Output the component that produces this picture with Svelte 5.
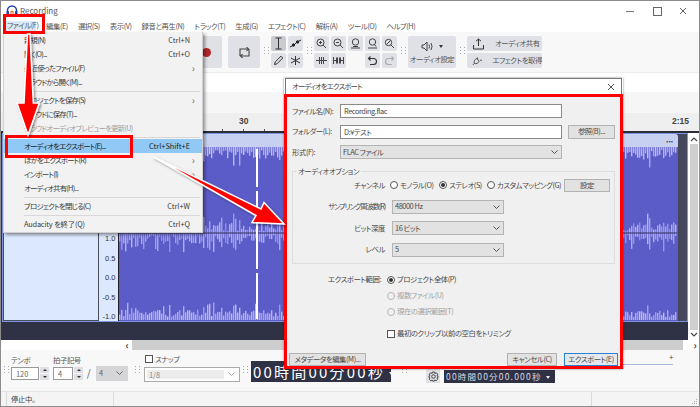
<script lang="ts">
	const menus = ['編集(E)', '選択(S)', '表示(V)', '録音と再生(N)', 'トラック(T)', '生成(G)', 'エフェクト(C)', '解析(A)', 'ツール(O)', 'ヘルプ(H)'];

	const fileMenu = [
		{ label: '新規(N)', key: 'Ctrl+N' },
		{ label: '開く(O)...', key: 'Ctrl+O' },
		{ label: '最近使ったファイル(F)', more: true },
		{ label: 'クラウドから開く(M)...' },
		{ sep: true },
		{ label: 'プロジェクトを保存(S)', more: true },
		{ label: 'クラウドに保存(T)...' },
		{ label: 'クラウドオーディオプレビューを更新(U)', off: true },
		{ sep: true },
		{ label: 'オーディオをエクスポート(E)...', key: 'Ctrl+Shift+E', on: true },
		{ label: 'ほかをエクスポート(R)', more: true },
		{ label: 'インポート(I)', more: true },
		{ label: 'オーディオ共有(H)...' },
		{ sep: true },
		{ label: 'プロジェクトを閉じる(C)', key: 'Ctrl+W' },
		{ sep: true },
		{ label: 'Audacity を終了(Q)', key: 'Ctrl+Q', latin: true },
	];

	// same bars on every load
	let seed = 7;
	function rnd() {
		seed = (seed * 16807) % 2147483647;
		return seed / 2147483647;
	}

	const bars: { x: number; y: number; h: number; o: number }[] = [];
	for (let x = 0; x < 558; x += 2) {
		const big = rnd() > 0.75 ? 1.8 : 1;
		bars.push({ x, y: 0, h: (3 + rnd() * 9) * big, o: 0.7 + rnd() * 0.3 });
		const up = (2 + rnd() * 9) * big;
		const down = (2 + rnd() * 9) * big;
		bars.push({ x, y: 86 - up, h: up + down, o: 0.5 + rnd() * 0.4 });
		const h = (3 + rnd() * 7) * big;
		bars.push({ x, y: 173 - h, h, o: 0.6 + rnd() * 0.4 });
	}

	const ticks = [12, 33, 54, 75, 96, 117, 138, 159, 180, 201, 222, 243, 264, 285, 510, 530, 550, 570, 590, 610, 630, 650, 670];
	const grip = [0, 1, 2];
</script>

<div class="window">
	<header class="titlebar">
		<svg width="12" height="12" viewBox="0 0 12 12">
			<path d="M1.5 7V5.5a4.5 4.5 0 0 1 9 0V7" fill="none" stroke="#1f3fa8" stroke-width="1.5" />
			<rect x="0.5" y="6" width="2.5" height="5" rx="1" fill="#1f3fa8" />
			<rect x="9" y="6" width="2.5" height="5" rx="1" fill="#1f3fa8" />
			<path d="M4 8h4M4.5 6.5h3M5 9.5h2" stroke="#e8601c" stroke-width="1.2" />
			<path d="M5.5 4.5h1v1h-1z" fill="#f2b01e" />
		</svg>
		<span class="title">Recording</span>
		<div class="winbtns">
			<span class="min"></span>
			<span class="max"></span>
			<svg width="8" height="8" viewBox="0 0 8 8"><path d="M1 1l6 6M7 1l-6 6" stroke="#555" stroke-width="0.9" /></svg>
		</div>
	</header>

	<nav class="menubar">
		<span class="menu-file">ファイル(F)</span>
		{#each menus as m}
			<span class="menu-item">{m}</span>
		{/each}
	</nav>

	<div class="toolbar">
		<div class="tbtn big"><span class="rec"></span></div>
		<div class="tbtn big loop">
			<svg width="13" height="13" viewBox="0 0 13 13" fill="none" stroke="#444" stroke-width="1.1">
				<path d="M3 9.5H2V3h8" /><path d="M8.5 1.2L10.5 3 8.5 4.8" /><path d="M10 3.5h1V10H3" /><path d="M4.5 8.2L2.5 10l2 1.8" />
			</svg>
		</div>
		<div class="grip">{#each grip as _}<i></i><i></i>{/each}</div>
		<div class="tools">
			<div class="sbtn active">
				<svg width="11" height="13" viewBox="0 0 11 13" fill="none" stroke="#333" stroke-width="1"><path d="M2.5 1h6M5.5 1v11M2.5 12h6" /></svg>
			</div>
			<div class="sbtn">
				<svg width="13" height="11" viewBox="0 0 13 11" fill="none" stroke="#222" stroke-width="1"><path d="M1 9l4-2 3-3 4-2" /><circle cx="4.5" cy="7" r="1.2" fill="#222" /><circle cx="8.5" cy="4" r="1.2" fill="#222" /></svg>
			</div>
			<div class="sbtn">
				<svg width="11" height="11" viewBox="0 0 11 11" fill="none" stroke="#333" stroke-width="1"><path d="M1.5 9.5l.7-2.6L8 1.2l1.800 1.800L4 8.800z" /></svg>
			</div>
			<div class="sbtn">
				<svg width="11" height="11" viewBox="0 0 11 11" fill="none" stroke="#333" stroke-width="1"><path d="M5.5 1v9M1 3l9 5M10 3L1 8" /></svg>
			</div>
		</div>
		<div class="grip">{#each grip as _}<i></i><i></i>{/each}</div>
		<div class="zooms">
			<div class="sbtn">
				<svg width="11" height="11" viewBox="0 0 11 11" fill="none" stroke="#444"><circle cx="4.5" cy="4.5" r="3.5" /><path d="M7 7l3 3M3 4.5h3M4.5 3v3" /></svg>
			</div>
			<div class="sbtn">
				<svg width="11" height="11" viewBox="0 0 11 11" fill="none" stroke="#444"><circle cx="4.5" cy="4.5" r="3.5" /><path d="M7 7l3 3M3 4.5h3" /></svg>
			</div>
			<div class="sbtn">
				<svg width="11" height="11" viewBox="0 0 11 11" fill="none" stroke="#444"><circle cx="5.5" cy="4" r="3.2" /><path d="M1 10h9M3 8.5h5" /></svg>
			</div>
			<div class="sbtn">
				<svg width="11" height="11" viewBox="0 0 11 11" fill="none" stroke="#444"><circle cx="5.5" cy="4" r="3.2" /><path d="M1 10h9M7.5 6.5l1.5 2" /></svg>
			</div>
			<div class="sbtn">
				<svg width="11" height="11" viewBox="0 0 11 11" fill="none" stroke="#444"><circle cx="4.5" cy="4.5" r="3.2" /><path d="M7 7l3 3M2.5 6.5l4-4" /></svg>
			</div>
			<div class="sbtn">
				<svg width="11" height="7" viewBox="0 0 11 7" fill="#444"><path d="M0 3h11v1H0zM3 0h1v7H3zM5 0h1v7H5zM7 0h1v7H7z" /></svg>
			</div>
			<div class="sbtn">
				<svg width="11" height="7" viewBox="0 0 11 7" fill="#444"><path d="M0 0h1v7H0zM10 0h1v7h-1zM3 .5h2v6H3zM6 .5h2v6H6zM1 3h2v1H1zM8 3h2v1H8z" /></svg>
			</div>
			<div class="sempty"></div>
			<div class="sbtn">
				<svg width="11" height="10" viewBox="0 0 11 10" fill="none" stroke="#333" stroke-width="1.1"><path d="M3 8.5h3.5a3 3 0 0 0 0-6H1.5" /><path d="M3.5 .5l-2 2 2 2" /></svg>
			</div>
			<div class="sbtn">
				<svg width="11" height="10" viewBox="0 0 11 10" fill="none" stroke="#aaa" stroke-width="1.1"><path d="M8 8.5H4.5a3 3 0 0 1 0-6h5" /><path d="M7.5 .5l2 2-2 2" /></svg>
			</div>
		</div>
		<div class="grip">{#each grip as _}<i></i><i></i>{/each}</div>
		<div class="tbtn audio">
			<div class="audio-ico">
				<svg width="15" height="11" viewBox="0 0 15 11" fill="none" stroke="#333" stroke-width="0.9"><path d="M1 4v3h2l3 3V1L3 4zM8 3.5q1 2 0 4M10 2q2 3.5 0 7" /></svg>
				<span class="tri"></span>
			</div>
			<span class="tlabel">オーディオ設定</span>
		</div>
		<div class="grip">{#each grip as _}<i></i><i></i>{/each}</div>
		<div class="share">
			<div class="sharebtn">
				<svg width="13" height="12" viewBox="0 0 13 12" fill="none" stroke="#333"><path d="M1.5 7v4h10V7M6.5 8V1M4 3.2L6.5 1 9 3.2" /></svg>
				<span>オーディオ共有</span>
			</div>
			<div class="sharebtn">
				<svg width="13" height="12" viewBox="0 0 13 12" fill="none" stroke="#333"><path d="M1 11l2-2c-1-2 0-5 3-6l3 3c-1 3-4 4-6 3M7 1.5v2.5M10 5h2.5" /></svg>
				<span>エフェクトを取得</span>
			</div>
		</div>
	</div>

	<div class="gapband"></div>

	<div class="ruler">
		{#each ticks as t}
			<i class="tick" style="left:{t + 209}px"></i>
		{/each}
		<span class="rlabel r30">30</span>
		<span class="rlabel r215">2:15</span>
	</div>

	<div class="tracks">
		<div class="trackarea">
			<div class="track">
				<div class="trackhead"></div>
				<div class="vruler">
					{#each [0, 1] as _}
						<div class="vchan">
							<span>1.0</span><span>0.5</span><span>0.0</span><span>-0.5</span><span>-1.0</span>
						</div>
					{/each}
				</div>
				<div class="clip">
					<div class="cliphead"><b>•••</b></div>
					<svg class="wave" width="558" height="174" viewBox="0 0 558 174">
						{#each bars as b}
							<rect x={b.x} y={b.y} width="1.4" height={b.h} fill="#c3c1f0" opacity={b.o} />
						{/each}
						<rect x="0" y="85.5" width="558" height="1" fill="#2e2e58" />
						<path d="M138 2v38M138 44v78M138 126v46" stroke="#fff" stroke-width="2" />
					</svg>
				</div>
				<div class="trackrest"></div>
			</div>
			<div class="trackfoot"></div>
		</div>
		<div class="vscroll">
			<svg class="up" width="8" height="6" viewBox="0 0 8 6"><path d="M1 5l3-3 3 3" fill="none" stroke="#444" stroke-width="1.2" /></svg>
			<div class="vthumb"></div>
			<svg class="down" width="8" height="6" viewBox="0 0 8 6"><path d="M1 1l3 3 3-3" fill="none" stroke="#444" stroke-width="1.2" /></svg>
		</div>
	</div>

	<div class="hscroll">
		<span class="arrow">‹</span>
		<div class="hthumb"></div>
		<span class="arrow">›</span>
	</div>

	<div class="bottombar">
		<div class="grip low">{#each grip as _}<i></i><i></i>{/each}</div>
		<div class="field w-tempo">
			<span>テンポ</span>
			<div class="numbox">
				<span class="num">120</span>
				<span class="spin"><em></em><u></u></span>
			</div>
		</div>
		<div class="field w-sig">
			<span>拍子記号</span>
			<div class="sigrow">
				<div class="numbox">
					<span class="num small">4</span>
					<span class="spin"><em></em><u></u></span>
				</div>
				<span class="slash">/</span>
				<div class="sigsel">4
					<svg width="7" height="4" viewBox="0 0 7 4"><path d="M.5.5l3 3 3-3" fill="none" stroke="#666" /></svg>
				</div>
			</div>
		</div>
		<div class="grip low">{#each grip as _}<i></i><i></i>{/each}</div>
		<div class="field w-snap">
			<label class="snaplabel"><span class="check"></span>スナップ</label>
			<div class="snapbox">
				<span class="snapin">1/8</span>
				<svg width="7" height="4" viewBox="0 0 7 4"><path d="M.5.5l3 3 3-3" fill="none" stroke="#aaa" /></svg>
			</div>
		</div>
		<div class="grip low">{#each grip as _}<i></i><i></i>{/each}</div>
		<div class="bigtime">00時間00分00秒<span class="tri light"></span></div>
		<div class="grip low second">{#each grip as _}<i></i><i></i>{/each}</div>
		<div class="gear">
			<svg width="11" height="11" viewBox="0 0 11 11" fill="none" stroke="#444"><circle cx="5.5" cy="5.5" r="1.8" /><path d="M4.5 1h2l.4 1.5 1.4-.7 1.4 1.4-.7 1.4L10 5v1.5l-1.1.4.7 1.4-1.4 1.4-1.4-.7-.3 1H4.5l-.4-1-1.4.7L1.3 8.3l.7-1.4L1 6.5V5l1-.4-.7-1.4 1.4-1.4 1.4.7z" /></svg>
		</div>
		<div class="smalltime">00時間00分00.000秒<span class="tri light"></span></div>
		<div class="slider">
			<span>+</span>
		</div>
	</div>

	<footer class="status">
		<span class="s1">停止中。</span>
		<span class="s2"></span>
		<svg class="resize" width="8" height="8" viewBox="0 0 8 8" fill="#aaa"><path d="M6 1h1v1H6zM4 3h1v1H4zM6 3h1v1H6zM2 5h1v1H2zM4 5h1v1H4zM6 5h1v1H6z" /></svg>
	</footer>

	<!-- file menu -->
	<div class="filemenu">
		{#each fileMenu as item}
			{#if item.sep}
				<div class="msep"></div>
			{:else}
				<div class="mrow" class:on={item.on} class:off={item.off} class:latin={item.latin}>
					<span>{item.label}</span>
					{#if item.key}<span class="key">{item.key}</span>{/if}
					{#if item.more}<span class="chev">›</span>{/if}
				</div>
			{/if}
		{/each}
	</div>

	<!-- export dialog -->
	<div class="dialog">
		<div class="dlgtitle">
			<span>オーディオをエクスポート</span>
			<svg width="8" height="8" viewBox="0 0 8 8"><path d="M1 1l6 6M7 1l-6 6" stroke="#444" stroke-width="0.9" /></svg>
		</div>
		<div class="dlgbody">
			<div class="rows">
				<span>ファイル名(N):</span>
				<div class="input">Recording.flac</div>
				<span></span>
				<span>フォルダー(L):</span>
				<div class="input">D:¥テスト</div>
				<div class="btn browse">参照(B)...</div>
				<span>形式(F):</span>
				<div class="select">FLAC ファイル<svg width="7" height="4" viewBox="0 0 7 4"><path d="M.5.5l3 3 3-3" fill="none" stroke="#555" /></svg></div>
				<span></span>
			</div>

			<fieldset class="options">
				<legend>オーディオオプション</legend>
				<div class="optgrid">
					<span class="olabel">チャンネル</span>
					<div class="channels">
						<span class="radio"></span><span class="rtext r1">モノラル(O)</span>
						<span class="radio sel"></span><span class="rtext r2">ステレオ(S)</span>
						<span class="radio"></span><span class="rtext r3">カスタムマッピング(G)</span>
						<div class="btn setbtn">設定</div>
					</div>
					<span class="olabel sampling">サンプリング周波数(R)</span>
					<div class="select short">48000 Hz<svg width="7" height="4" viewBox="0 0 7 4"><path d="M.5.5l3 3 3-3" fill="none" stroke="#555" /></svg></div>
					<span class="olabel">ビット深度</span>
					<div class="select short">16 ビット<svg width="7" height="4" viewBox="0 0 7 4"><path d="M.5.5l3 3 3-3" fill="none" stroke="#555" /></svg></div>
					<span class="olabel">レベル</span>
					<div class="select short">5<svg width="7" height="4" viewBox="0 0 7 4"><path d="M.5.5l3 3 3-3" fill="none" stroke="#555" /></svg></div>
				</div>
			</fieldset>

			<div class="range">
				<span class="rangelabel">エクスポート範囲:</span>
				<div class="rangeopt"><span class="radio sel"></span>プロジェクト全体(P)</div>
				<span></span>
				<div class="rangeopt dis"><span class="radio"></span>複数ファイル(U)</div>
				<span></span>
				<div class="rangeopt dis"><span class="radio"></span>現在の選択範囲(T)</div>
			</div>

			<div class="trim"><span class="check"></span>最初のクリップ以前の空白をトリミング</div>

			<div class="actions">
				<div class="btn meta">メタデータを編集(M)...</div>
				<div class="btn cancel">キャンセル(C)</div>
				<div class="btn primary">エクスポート(E)</div>
			</div>
		</div>
	</div>

	<!-- red annotations -->
	<div class="mark mark-file"></div>
	<div class="mark mark-export"></div>
	<svg class="arrows" width="700" height="407" viewBox="0 0 700 407">
		<defs>
			<filter id="sh" x="-20%" y="-20%" width="140%" height="140%">
				<feDropShadow dx="1.5" dy="1.5" stdDeviation="1.2" flood-color="#000" flood-opacity="0.4" />
			</filter>
		</defs>
		<g filter="url(#sh)" fill="#f00" stroke="#fff" stroke-width="1.5" stroke-linejoin="miter">
			<path d="M27.5 34h2.5l3.300 69h6L28 135 17 103h7z" />
			<path d="M153 156.5L261 209l3-6.5 20 21.5-32-1.5 4-7z" />
		</g>
	</svg>
</div>

<style>
	:global(body) {
		margin: 0;
		background: #fff;
	}

	.window {
		position: relative;
		width: 700px;
		height: 407px;
		box-sizing: border-box;
		border: 1px solid #8c8c8c;
		display: flex;
		flex-direction: column;
		overflow: hidden;
		font-family: 'Noto Sans CJK JP', 'Noto Sans', sans-serif;
		font-feature-settings: 'palt';
		font-size: 7.4px;
		letter-spacing: -0.45px;
		line-height: 1.2;
		color: #444;
		background: #fff;
	}

	.titlebar {
		height: 20px;
		flex: none;
		display: flex;
		align-items: center;
		padding-left: 5px;
		gap: 2px;
	}

	.title {
		color: #555;
		font-size: 8px;
		letter-spacing: 0;
	}

	.winbtns {
		margin-left: auto;
		display: flex;
		align-items: center;
		gap: 17px;
		padding-right: 12px;
	}

	.min {
		width: 8px;
		height: 1px;
		background: #777;
	}

	.max {
		width: 7px;
		height: 7px;
		border: 1px solid #666;
		margin-left: 2px;
	}

	.menubar {
		height: 11px;
		flex: none;
		display: flex;
		align-items: center;
		gap: 10px;
		padding-left: 5px;
		color: #555;
		white-space: nowrap;
	}

	.menu-file {
		background: #dbe9f6;
		height: 11px;
		padding: 0 1px;
		width: 30px;
		box-sizing: border-box;
	}

	.toolbar {
		height: 41px;
		flex: none;
		box-sizing: border-box;
		padding: 4px 0 0 189px;
		display: flex;
		background: #f8f8f9;
		border-bottom: 1px solid #ececec;
	}

	.tbtn {
		background: #e0e1e6;
		border-radius: 2px;
		height: 32px;
		display: flex;
		align-items: center;
		justify-content: center;
	}

	.big {
		width: 32px;
	}

	.loop {
		margin-left: 6px;
	}

	.rec {
		width: 9px;
		height: 9px;
		border-radius: 50%;
		background: #b3262b;
	}

	.grip {
		width: 5px;
		margin: 11px 2px 0 4px;
		height: 8px;
		display: grid;
		grid-template-columns: 1px 1px;
		column-gap: 3px;
		row-gap: 2px;
		align-content: start;
	}

	.grip i {
		width: 1px;
		height: 1px;
		background: #a9a9ae;
	}

	.tools {
		display: grid;
		grid-template-columns: 15px 15px;
		grid-template-rows: 15px 15px;
		gap: 2px;
	}

	.zooms {
		display: grid;
		grid-template-columns: repeat(5, 15px);
		grid-template-rows: 15px 15px;
		gap: 2px;
	}

	.sbtn {
		background: #e0e1e6;
		border-radius: 2px;
		display: flex;
		align-items: center;
		justify-content: center;
	}

	.sbtn.active {
		background: #c9cad2;
	}

	.audio {
		width: 48px;
		flex-direction: column;
		gap: 3px;
	}

	.audio-ico {
		display: flex;
		align-items: center;
		gap: 3px;
	}

	.tri {
		width: 0;
		height: 0;
		border-left: 2.5px solid transparent;
		border-right: 2.5px solid transparent;
		border-top: 3.5px solid #333;
	}

	.tri.light {
		border-top-color: #eee;
		margin-left: 4px;
		display: inline-block;
		vertical-align: middle;
	}

	.tlabel {
		color: #555;
		white-space: nowrap;
	}

	.share {
		display: flex;
		flex-direction: column;
		gap: 2px;
	}

	.sharebtn {
		width: 75px;
		height: 15px;
		background: #e0e1e6;
		border-radius: 2px;
		display: flex;
		align-items: center;
		padding-left: 5px;
		box-sizing: border-box;
		color: #555;
		white-space: nowrap;
	}

	.sharebtn span {
		margin-left: 10px;
	}

	.gapband {
		height: 40px;
		flex: none;
		background: linear-gradient(#fff 0 19px, #f6f6f6 19px);
	}

	.ruler {
		position: relative;
		height: 18px;
		flex: none;
		background: #efeff0;
	}

	.tick {
		position: absolute;
		bottom: 0;
		width: 1px;
		height: 2px;
		background: #555;
	}

	.rlabel {
		position: absolute;
		top: 3px;
		font-family: 'Liberation Sans', sans-serif;
		font-weight: bold;
		font-size: 8.5px;
		letter-spacing: 0;
		color: #444;
	}

	.r30 {
		left: 238px;
	}

	.r215 {
		left: 671px;
	}

	.tracks {
		height: 209px;
		flex: none;
		display: flex;
		border-top: 2px solid #2a2c38;
		box-sizing: border-box;
		background: #2f3245;
	}

	.trackarea {
		width: 687px;
		flex: none;
		display: flex;
		flex-direction: column;
	}

	.track {
		height: 189px;
		flex: none;
		box-sizing: border-box;
		margin-left: 1px;
		border: 1.5px solid #8093e0;
		display: flex;
		background: #45485c;
	}

	.trackhead {
		width: 95.5px;
		flex: none;
		background: #dce8fd;
		border: 1px solid #4a4d5c;
		box-sizing: border-box;
	}

	.vruler {
		width: 20px;
		flex: none;
		background: #dce8fd;
		border-right: 1.5px solid #222;
		box-sizing: border-box;
		padding-top: 13px;
		display: flex;
		flex-direction: column;
	}

	.vchan {
		flex: 1;
		display: flex;
		flex-direction: column;
		justify-content: space-between;
		align-items: flex-end;
		padding: 0 2px 0 0;
		font-family: 'Liberation Sans', sans-serif;
		font-size: 7.5px;
		letter-spacing: 0;
		color: #333;
	}

	.clip {
		width: 559px;
		flex: none;
		display: flex;
		flex-direction: column;
		background: #5c5cc9;
		border-top-right-radius: 3px;
		overflow: hidden;
	}

	.cliphead {
		height: 13px;
		flex: none;
		background: #c8d0f2;
		display: flex;
		justify-content: flex-end;
		align-items: center;
		padding-right: 4px;
	}

	.cliphead b {
		font-size: 5px;
		letter-spacing: 0.5px;
		color: #333;
	}

	.wave {
		display: block;
	}

	.trackrest {
		flex: 1;
	}

	.trackfoot {
		flex: 1;
	}

	.vscroll {
		flex: 1;
		background: #fff;
		display: flex;
		flex-direction: column;
		align-items: center;
		padding: 3px 1px 2px 2px;
		gap: 2px;
	}

	.vthumb {
		flex: 1;
		width: 100%;
		background: #cfcfcf;
	}

	.hscroll {
		height: 10px;
		flex: none;
		display: flex;
		align-items: center;
		padding-left: 122px;
		background: #fff;
		color: #333;
		font-size: 10px;
		line-height: 10px;
	}

	.arrow {
		width: 8px;
		text-align: center;
		font-weight: bold;
	}

	.hthumb {
		flex: 1;
		height: 100%;
		background: #cdcdcd;
		margin-right: 8px;
		margin-left: 1px;
	}

	.bottombar {
		height: 42px;
		flex: none;
		box-sizing: border-box;
		background: #f8f8f9;
		border-bottom: 1px solid #e4e4e4;
		display: flex;
		align-items: flex-start;
		padding-left: 3px;
		position: relative;
		color: #555;
	}

	.grip.low {
		margin: 16px 0 0 0;
	}

	.field {
		display: flex;
		flex-direction: column;
		margin-top: 6px;
		gap: 2px;
	}

	.w-tempo {
		margin-left: 2px;
		width: 42px;
	}

	.w-sig {
		width: 80px;
	}

	.w-sig + .grip.low {
		margin-left: 2px;
	}

	.w-snap {
		width: 96px;
		margin-left: 4px;
		margin-right: 3px;
	}

	.numbox {
		display: flex;
		gap: 1px;
	}

	.num {
		width: 28px;
		height: 13px;
		box-sizing: border-box;
		border: 1px solid #999;
		background: #fff;
		padding-left: 4px;
		line-height: 11px;
		color: #666;
		letter-spacing: 0;
	}

	.num.small {
		width: 20px;
	}

	.spin {
		width: 9px;
		display: flex;
		flex-direction: column;
		gap: 1px;
	}

	.spin em,
	.spin u {
		flex: 1;
		background: #dfe0e4;
		position: relative;
		display: block;
	}

	.spin em::after,
	.spin u::after {
		content: '';
		position: absolute;
		left: 2.5px;
		top: 2px;
		border-left: 2px solid transparent;
		border-right: 2px solid transparent;
	}

	.spin em::after {
		border-bottom: 2px solid #333;
	}

	.spin u::after {
		border-top: 2px solid #333;
	}

	.sigrow {
		display: flex;
		align-items: center;
		margin-top: -1px;
	}

	.slash {
		width: 13px;
		text-align: center;
		font-size: 10px;
		padding-right: 2px;
		box-sizing: border-box;
	}

	.sigsel {
		width: 32px;
		height: 15px;
		box-sizing: border-box;
		background: #d5d5d8;
		display: flex;
		align-items: center;
		justify-content: space-between;
		padding: 0 5px 0 3px;
		color: #666;
	}

	.snaplabel {
		display: flex;
		align-items: center;
		gap: 2px;
		margin-top: -1px;
		margin-left: 1px;
	}

	.check {
		width: 8px;
		height: 8px;
		border: 1px solid #555;
		background: #fff;
		box-sizing: border-box;
		display: inline-block;
		flex: none;
	}

	.snapbox {
		height: 15px;
		box-sizing: border-box;
		border: 1px solid #aaa;
		background: #fff;
		display: flex;
		align-items: center;
		padding: 0 4px 0 2px;
		gap: 4px;
		margin-top: 1px;
	}

	.snapin {
		flex: 1;
		background: #ececec;
		height: 9px;
		padding-left: 2px;
		color: #888;
		line-height: 9px;
		letter-spacing: 0;
	}

	.bigtime {
		width: 140px;
		height: 21px;
		box-sizing: border-box;
		margin: 11px 0 0 3px;
		background: #2f3245;
		color: #fff;
		font-size: 15px;
		line-height: 21px;
		letter-spacing: 2.2px;
		padding-left: 2px;
		white-space: nowrap;
		overflow: hidden;
		font-feature-settings: normal;
	}

	.grip.second {
		margin-left: 11px;
	}

	.gear {
		width: 14px;
		height: 14px;
		margin: 19px 0 0 19px;
		background: #e0e1e6;
		display: flex;
		align-items: center;
		justify-content: center;
	}

	.smalltime {
		width: 111px;
		height: 13px;
		margin: 20px 0 0 4px;
		background: #2f3245;
		color: #d8dbe6;
		font-size: 8.5px;
		line-height: 13px;
		letter-spacing: 1.2px;
		padding-left: 2px;
		box-sizing: border-box;
		white-space: nowrap;
		overflow: hidden;
		font-feature-settings: normal;
	}

	.slider {
		position: absolute;
		left: 622px;
		top: 2px;
		width: 50px;
		height: 12px;
		border-bottom: 1px solid #a8bce0;
		text-align: right;
		font-size: 8px;
		line-height: 10px;
	}

	.status {
		flex: 1;
		display: flex;
		position: relative;
		background: #f4f4f5;
	}

	.s1 {
		width: 102px;
		padding-left: 4px;
		margin-left: 5px;
		border-left: 1px solid #dcdcdc;
		border-right: 1px solid #dcdcdc;
		line-height: 14px;
	}

	.s2 {
		width: 477px;
		border-right: 1px solid #dcdcdc;
	}

	.resize {
		position: absolute;
		right: 1px;
		bottom: 0;
	}

	.filemenu {
		position: absolute;
		left: 2px;
		top: 31px;
		width: 200px;
		height: 201px;
		box-sizing: border-box;
		padding: 1px 0;
		background: #f2f2f2;
		border: 1px solid #d0d0d0;
		border-top: 0;
		box-shadow: 2px 2px 3px rgba(0, 0, 0, 0.4);
		color: #3c3c3c;
	}

	.mrow {
		height: 14px;
		display: flex;
		align-items: center;
		justify-content: space-between;
		padding: 0 12px 0 20px;
		white-space: nowrap;
		position: relative;
		letter-spacing: -0.78px;
	}

	.mrow.latin {
		letter-spacing: -0.2px;
	}

	.mrow.on {
		background: #90c8f6;
		color: #222;
	}

	.mrow.off {
		color: #a0a0a0;
	}

	.key {
		letter-spacing: 0;
	}

	.chev {
		font-size: 10px;
		margin-right: -4px;
		color: #666;
	}

	.msep {
		height: 1px;
		margin: 1.5px 2px 1.5px 20px;
		background: #d8d8d8;
	}

	.dialog {
		position: absolute;
		left: 283px;
		top: 77px;
		width: 339px;
		box-shadow: 0 0 2px rgba(0, 0, 0, 0.5);
		color: #4a4a4a;
	}

	.dlgtitle {
		height: 16px;
		margin: 0 1px;
		background: #fff;
		display: flex;
		align-items: center;
		justify-content: space-between;
		padding: 0 6px;
		border: 1px solid #777;
		border-bottom: 0;
		box-sizing: border-box;
		color: #444;
		letter-spacing: -0.85px;
	}

	.dlgbody {
		box-sizing: border-box;
		height: 275px;
		border: 3px solid #f00;
		background: #f0f0f0;
		padding: 7px 5px 0;
	}

	.rows {
		display: grid;
		grid-template-columns: 48px 222px 47px;
		grid-template-rows: 14px 14px 14px;
		row-gap: 6.5px;
		align-items: center;
		white-space: nowrap;
	}

	.input {
		height: 14px;
		box-sizing: border-box;
		border: 1px solid #8a8a8a;
		background: #fff;
		padding-left: 3px;
		line-height: 12px;
	}

	.select {
		height: 14px;
		box-sizing: border-box;
		border: 1px solid #b4b4b4;
		background: #e2e2e2;
		display: flex;
		align-items: center;
		justify-content: space-between;
		padding: 0 3px 0 2px;
	}

	.short {
		width: 112px;
	}

	.btn {
		height: 14px;
		box-sizing: border-box;
		border: 1px solid #b2b2b2;
		background: #e2e2e2;
		display: flex;
		align-items: center;
		justify-content: center;
	}

	.browse {
		margin-left: 6px;
		width: 47px;
	}

	.options {
		margin: 6px 0 0;
		padding: 0 0 6px;
		width: 323px;
		box-sizing: border-box;
		border: 1px solid #dedede;
		min-width: 0;
	}

	.options legend {
		padding: 0 2px;
		margin-left: 3px;
		line-height: 12px;
	}

	.optgrid {
		display: grid;
		grid-template-columns: 92px 1fr;
		grid-template-rows: 14px 14px 14px 14px;
		column-gap: 7px;
		row-gap: 7.5px;
		align-items: center;
		margin-top: 1px;
	}

	.olabel {
		text-align: right;
		white-space: nowrap;
	}

	.sampling {
		letter-spacing: -1.2px;
	}

	.channels {
		display: flex;
		align-items: center;
		white-space: nowrap;
		margin-left: -2px;
	}

	.radio {
		width: 8px;
		height: 8px;
		box-sizing: border-box;
		border: 1px solid #555;
		border-radius: 50%;
		background: #fff;
		flex: none;
		display: inline-block;
		position: relative;
	}

	.radio.sel::after {
		content: '';
		position: absolute;
		inset: 1px;
		border-radius: 50%;
		background: #333;
	}

	.rtext {
		margin-left: 2px;
	}

	.r1 {
		width: 39px;
	}

	.r2 {
		width: 38px;
	}

	.r3 {
		width: 67px;
	}

	.setbtn {
		width: 46px;
		height: 13px;
	}

	.range {
		display: grid;
		grid-template-columns: 95px 1fr;
		grid-template-rows: 14px 14px 14px;
		row-gap: 2px;
		align-items: center;
		margin-top: 9px;
	}

	.rangelabel {
		white-space: nowrap;
		text-align: right;
		padding-right: 6px;
	}

	.rangeopt {
		display: flex;
		align-items: center;
		gap: 2px;
	}

	.rangeopt.dis {
		color: #a2a2a2;
	}

	.rangeopt.dis .radio {
		border-color: #b5b5b5;
		background: #f0f0f0;
	}

	.trim {
		display: flex;
		align-items: center;
		gap: 2px;
		height: 14px;
		margin: 8px 0 0 95px;
	}

	.actions {
		display: flex;
		margin: 12px -3px 0 -3px;
	}

	.actions .btn {
		height: 13px;
		white-space: nowrap;
	}

	.meta {
		width: 77px;
	}

	.cancel {
		width: 50px;
		margin-left: auto;
		margin-right: 7px;
	}

	.primary {
		width: 54px;
		border: 1px solid #2a7fd4;
		background: #e4e8ec;
	}

	.mark {
		position: absolute;
		box-sizing: border-box;
		border: 3px solid #f00;
	}

	.mark-file {
		left: 2px;
		top: 13px;
		width: 42px;
		height: 20px;
	}

	.mark-export {
		left: 4px;
		top: 134px;
		width: 128px;
		height: 23px;
	}

	.arrows {
		position: absolute;
		left: -1px;
		top: -1px;
		pointer-events: none;
	}
</style>
